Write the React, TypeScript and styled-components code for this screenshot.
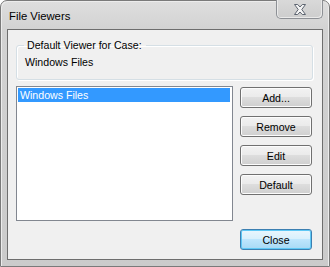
import * as React from 'react';
import styled, { createGlobalStyle } from 'styled-components';

const viewers = ['Windows Files'];
const actions = ['Add...', 'Remove', 'Edit', 'Default'];

const App = () => {
	const [selected, setSelected] = React.useState(0);
	return (
		<>
			<GlobalStyle />
			<Window>
				<TitleBar>
					<Title>File Viewers</Title>
					<CloseBox aria-label="Close">
						<svg width="14" height="13" viewBox="0 0 14 13">
							<path
								d="M1.5 1.5h3.2L7 4l2.3-2.5h3.2L8.8 6.5l3.7 5H9.3L7 9 4.7 11.5H1.5l3.7-5z"
								fill="#f4f4f4"
								stroke="#5d6470"
								strokeWidth="1"
								strokeLinejoin="round"
							/>
						</svg>
					</CloseBox>
				</TitleBar>
				<Client>
					<GroupBox>
						<legend>Default Viewer for Case:</legend>
						<GroupValue>{viewers[0]}</GroupValue>
					</GroupBox>
					<MainRow>
						<ListBox>
							{viewers.map((v, i) => (
								<ListItem key={v} active={i === selected} onClick={() => setSelected(i)}>
									{v}
								</ListItem>
							))}
						</ListBox>
						<ButtonColumn>
							{actions.map(a => (
								<Button key={a}>{a}</Button>
							))}
						</ButtonColumn>
					</MainRow>
					<Footer>
						<Button primary>Close</Button>
					</Footer>
				</Client>
			</Window>
		</>
	);
};

export default App;

const uiFont = '"Liberation Sans", Arial, sans-serif';
const fontSize = '10.6px';

const GlobalStyle = createGlobalStyle`
	html, body {
		margin: 0;
		padding: 0;
		background: #ffffff;
	}
	body {
		font-family: ${uiFont};
		font-size: ${fontSize};
		color: #000;
	}
`;

const Window = styled.div`
	box-sizing: border-box;
	display: flex;
	flex-direction: column;
	width: 330px;
	height: 267px;
	padding: 0 6px 6px 6px;
	border: 1px solid #7a7a7a;
	border-radius: 7px 7px 0 0;
	background: linear-gradient(#dedede 0px, #d2d2d2 30px, #cbcbcb 100%);
	box-shadow: inset 1px 1px 0 #ececec, inset -1px 0 0 #ececec;
`;

const TitleBar = styled.div`
	display: flex;
	align-items: flex-start;
	justify-content: space-between;
	height: 28px;
`;

const Title = styled.span`
	margin: 9px 0 0 2px;
	font-size: 11.3px;
	color: #000;
`;

const CloseBox = styled.div`
	box-sizing: border-box;
	display: flex;
	align-items: center;
	justify-content: center;
	width: 47px;
	height: 19px;
	margin-top: -1px;
	padding-top: 1px;
	border: 1px solid #8d9095;
	border-top: none;
	border-radius: 0 0 5px 5px;
	background: linear-gradient(#d9d9d9, #cdcdcd);
	box-shadow: inset 1px 0 0 #eaeaea, inset -1px -1px 0 #eaeaea;
`;

const Client = styled.div`
	box-sizing: border-box;
	flex: 1;
	display: flex;
	flex-direction: column;
	padding: 9px 9px 9px 8px;
	border: 1px solid #6e6e6e;
	background: #f0f0f0;
`;

const GroupBox = styled.fieldset`
	box-sizing: border-box;
	margin: 0;
	height: 41px;
	padding: 1px 8px 0 8px;
	border: 1px solid #d5dfe5;
	border-radius: 3px;
	box-shadow: inset 1px 1px 0 #ffffff, 1px 1px 0 #ffffff;

	legend {
		margin-left: -1px;
		padding: 0 4px 0 3px;
		font-size: ${fontSize};
		line-height: 12px;
		color: #000;
	}
`;

const GroupValue = styled.div`
	line-height: 13px;
	margin-top: 4px;
`;

const MainRow = styled.div`
	display: flex;
	gap: 7px;
	margin-top: 6px;
`;

const ListBox = styled.div`
	box-sizing: border-box;
	width: 217px;
	height: 135px;
	padding: 1px 1px 0 1px;
	border: 1px solid #828790;
	background: #ffffff;
`;

const ListItem = styled.div<{ active?: boolean }>`
	height: 14px;
	padding-left: 2px;
	margin-right: 1px;
	line-height: 14px;
	cursor: default;
	background: ${p => (p.active ? '#3399ff' : 'transparent')};
	color: ${p => (p.active ? '#ffffff' : '#000000')};
`;

const ButtonColumn = styled.div`
	display: flex;
	flex-direction: column;
	gap: 8px;
	padding-top: 1px;
`;

const Button = styled.button<{ primary?: boolean }>`
	box-sizing: border-box;
	width: 72px;
	height: 21px;
	padding: 0;
	font-family: ${uiFont};
	font-size: ${fontSize};
	color: #000;
	border-radius: 3px;
	border: 1px solid ${p => (p.primary ? '#3c7fb1' : '#707070')};
	background: ${p =>
		p.primary
			? 'linear-gradient(#eaf6fd 0%, #d9f0fc 45%, #bee6fd 50%, #a7d9f5 100%)'
			: 'linear-gradient(#f2f2f2 0%, #ebebeb 45%, #dddddd 50%, #cfcfcf 100%)'};
	box-shadow: inset 0 0 0 1px ${p => (p.primary ? '#5ec8f5' : '#fcfcfc')};
	cursor: default;
`;

const Footer = styled.div`
	display: flex;
	justify-content: flex-end;
	margin-top: 8px;
	padding-right: 1px;
`;
